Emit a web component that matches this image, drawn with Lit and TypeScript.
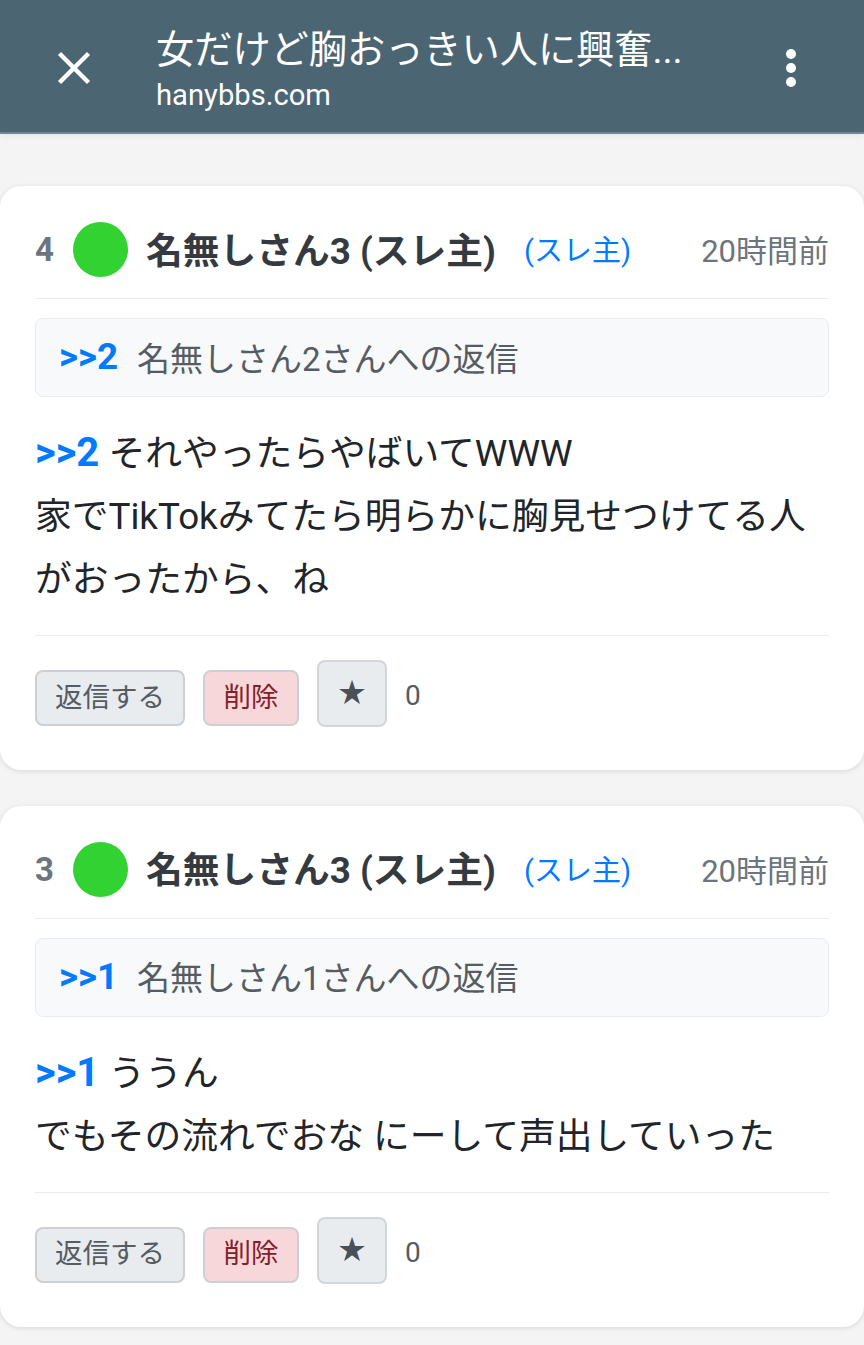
import { LitElement, html, css } from "lit";
import { customElement } from "lit/decorators.js";

interface Post { no: number; ref: number; lines: string[]; }

const posts: Post[] = [
  { no: 4, ref: 2, lines: ["それやったらやばいてWWW", "家でTikTokみてたら明らかに胸見せつけてる人", "がおったから、ね"] },
  { no: 3, ref: 1, lines: ["ううん", "でもその流れでおな にーして声出していった"] },
];

@customElement("app-root")
export class AppRoot extends LitElement {
  static styles = css`
    :host {
      display: block;
      width: 864px;
      height: 1345px;
      overflow: hidden;
      background: #f4f4f4;
      font-family: Roboto, "Noto Sans CJK JP", sans-serif;
      color: #212529;
    }
    .bar {
      box-sizing: border-box;
      height: 134px;
      padding-top: 4px;
      background: #4b6573;
      border-bottom: 2px solid #6f8592;
      box-shadow: 0 2px 6px rgba(0, 0, 0, 0.06);
      display: flex;
      align-items: center;
      color: #fff;
    }
    .close { width: 36px; height: 36px; margin-left: 56px; flex: none; }
    .titles { margin-left: 64px; margin-top: 2px; flex: 1; display: flex; flex-direction: column; }
    .title { font-size: 38.2px; line-height: 50px; white-space: nowrap; overflow: hidden; }
    .url { font-size: 29.2px; line-height: 36px; margin-top: 2px; }
    .more { width: 12px; height: 38px; margin-right: 67px; flex: none; }
    .list { padding-top: 52px; display: flex; flex-direction: column; gap: 35.6px; }
    .card {
      background: #fff;
      border-radius: 21px;
      box-shadow: 0 1px 5px rgba(0, 0, 0, 0.12);
      padding: 36px 35px 0;
    }
    .head {
      display: flex;
      align-items: center;
      padding-bottom: 21px;
      height: 55px;
      border-bottom: 1px solid #e9ebed;
    }
    .no { font-size: 33px; font-weight: 700; color: #6c757d; width: 38px; flex: none; }
    .avatar { width: 55px; height: 55px; border-radius: 50%; background: #32d233; flex: none; }
    .name { font-size: 36.75px; line-height: 50px; font-weight: 700; color: #343a40; margin-left: 18px; margin-top: 4px; white-space: nowrap; }
    .op { font-size: 29px; line-height: 50px; color: #007bff; margin-left: 28px; white-space: nowrap; margin-top: 3px; }
    .time { font-size: 31px; line-height: 50px; color: #6c757d; margin-left: auto; white-space: nowrap; margin-top: 5px; }
    .reply {
      box-sizing: border-box;
      margin-top: 19px;
      height: 79px;
      background: #f8f9fa;
      border: 1px solid #e9ecef;
      border-radius: 8px;
      padding: 0 24px 2px 23px;
      display: flex;
      align-items: center;
      font-size: 33px;
      color: #555c63;
    }
    .ref { font-weight: 700; color: #007bff; margin-right: 19px; font-size: 36.75px; }
    .body { margin-top: 24px; font-size: 36.75px; line-height: 63px; color: #212529; white-space: nowrap; }
    .body .ref { margin-right: 0; font-size: 40px; }
    .foot {
      border-top: 1px solid #e9ebed;
      margin-top: 24px;
      padding: 24px 0 43px;
      display: flex;
      align-items: flex-start;
    }
    .btn {
      box-sizing: border-box;
      height: 56px;
      padding-bottom: 7px;
      border: 2px solid #cdd0d3;
      border-radius: 8px;
      background: #e9ecef;
      color: #555c63;
      font-size: 27.5px;
      display: flex;
      align-items: center;
      justify-content: center;
      margin-top: 10px;
      margin-right: 18px;
    }
    .reply-btn { width: 150px; }
    .del { width: 96px; background: #f8d7da; color: #842029; }
    .star { width: 70px; height: 67px; margin: 0; padding-bottom: 6px; border-color: #d2d6db; font-size: 27px; color: #495057; }
    .count { margin-left: 18px; font-size: 28px; line-height: 63px; margin-top: 4px; color: #555c63; }
  `;

  private renderPost(p: Post) {
    return html`
      <article class="card">
        <div class="head">
          <span class="no">${p.no}</span>
          <span class="avatar"></span>
          <span class="name">名無しさん3 (スレ主)</span>
          <span class="op">(スレ主)</span>
          <span class="time">20時間前</span>
        </div>
        <div class="reply"><span class="ref">&gt;&gt;${p.ref}</span>名無しさん${p.ref}さんへの返信</div>
        <div class="body">
          ${p.lines.map((l, i) => html`<div>${i === 0 ? html`<span class="ref">&gt;&gt;${p.ref}</span> ` : ""}${l}</div>`)}
        </div>
        <div class="foot">
          <span class="btn reply-btn">返信する</span>
          <span class="btn del">削除</span>
          <span class="btn star">★</span>
          <span class="count">0</span>
        </div>
      </article>
    `;
  }

  render() {
    return html`
      <header class="bar">
        <svg class="close" viewBox="0 0 36 36"><path d="M3.5 3.5 L32.5 32.5 M32.5 3.5 L3.5 32.5" stroke="#fff" stroke-width="4.5" fill="none"/></svg>
        <div class="titles">
          <div class="title">女だけど胸おっきい人に興奮...</div>
          <div class="url">hanybbs.com</div>
        </div>
        <svg class="more" viewBox="0 0 12 38"><circle cx="6" cy="5" r="5" fill="#fff"/><circle cx="6" cy="19" r="5" fill="#fff"/><circle cx="6" cy="33" r="5" fill="#fff"/></svg>
      </header>
      <main class="list">${posts.map((p) => this.renderPost(p))}</main>
    `;
  }
}
